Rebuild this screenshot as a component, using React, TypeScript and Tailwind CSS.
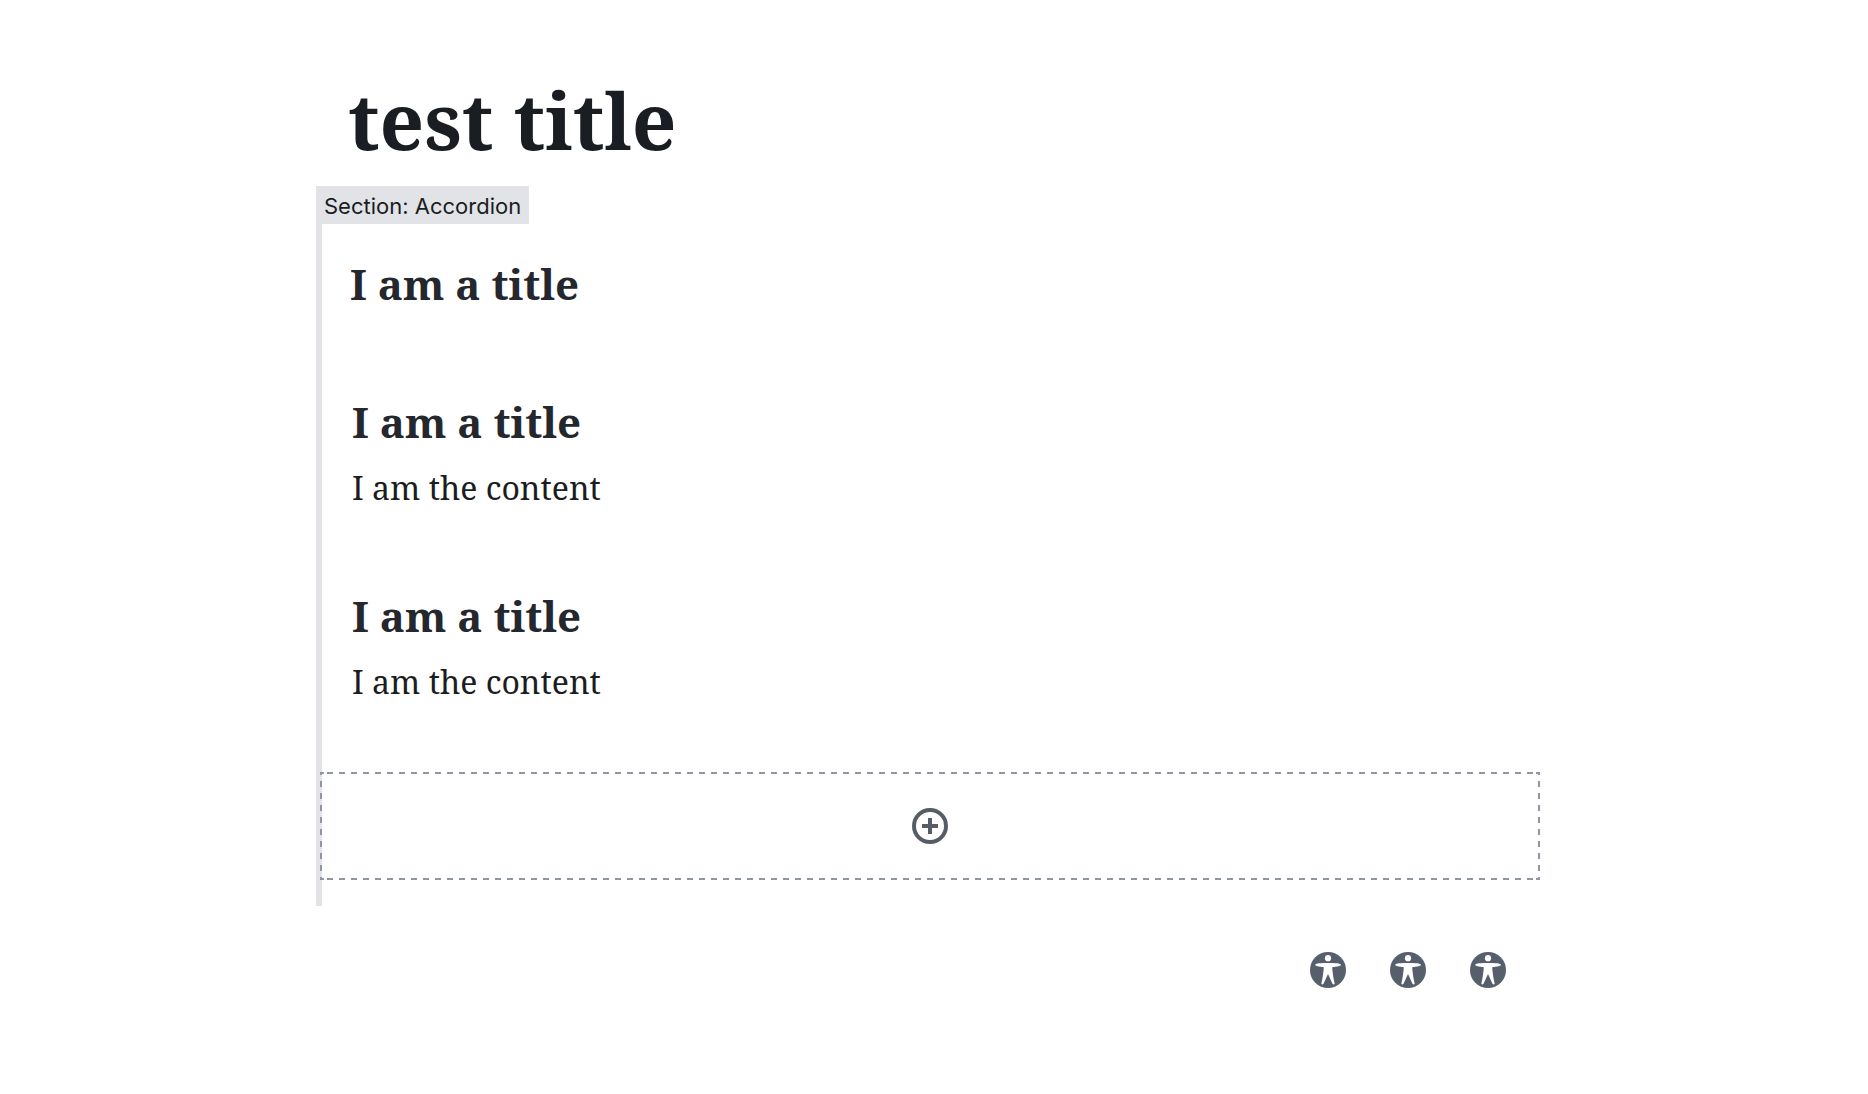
const items = [
  { title: "I am a title", content: "" },
  { title: "I am a title", content: "I am the content" },
  { title: "I am a title", content: "I am the content" },
];

function AddIcon() {
  return (
    <svg className="size-9" viewBox="0 0 36 36" fill="none" stroke="#565d66" strokeWidth="4">
      <circle cx="18" cy="18" r="16" />
      <path d="M10 18h16M18 10v16" />
    </svg>
  );
}

function AccessibilityIcon() {
  return (
    <svg className="size-9" viewBox="0 0 36 36">
      <circle cx="18" cy="18" r="18" fill="#565f6b" />
      <circle cx="18" cy="6.2" r="3.1" fill="#fff" />
      <path
        d="M5.200 12.700C5.200 11.400 11 11 18 11s13 .4 13 1.700c0 1.300-4 2-8.800 2.600.2 5 1.200 10.500 2.400 16.300.2 1.200-1.600 1.200-2.100.2L18 22l-4.500 9.800c-.5 1-2.300 1-2.100-.2 1.200-5.800 2.200-11.300 2.400-16.300-4.800-.6-8.600-1.300-8.600-2.600z"
        fill="#fff"
      />
    </svg>
  );
}

export default function App() {
  return (
    <main className="min-h-screen bg-white pt-20 pr-3 text-[#1a1d21] font-['Noto_Serif','DejaVu_Serif_Condensed','DejaVu_Serif',serif]">
      <div className="mx-auto max-w-[1224px]">
        <h1 className="pl-8 text-[78px] leading-20 font-bold">test title</h1>

        <section className="mt-[26px] border-l-6 border-[#e2e3e7] pb-[26px]">
          <div className="-ml-[6px] flex">
            <span className="bg-[#e2e3e7] px-2 pt-[2px] text-[22px] leading-[36px] font-['Inter',sans-serif]">
              Section: Accordion
            </span>
          </div>

          <div className="flex flex-col gap-[70px] pt-[30px] pb-[62px]">
            {items.map((item, i) => (
              <article key={i} className={item.content ? "pl-[30px]" : "pb-2 pl-7"}>
                <h2 className="text-[42px] leading-[60px] font-bold text-[#24272d]">{item.title}</h2>
                {item.content && (
                  <p className="mt-2 text-[32px] leading-[56px]">{item.content}</p>
                )}
              </article>
            ))}
          </div>

          {/* 6px on / 6px off dashes on all four edges, with short solid corners */}
          <button
            type="button"
            aria-label="Add item"
            className="-ml-[2px] flex h-[108px] w-[calc(100%+2px)] items-center justify-center [background:linear-gradient(90deg,#8f96a3_4px,transparent_0_calc(100%_-_4px),#8f96a3_0)_0_0/100%_2px_no-repeat,linear-gradient(90deg,#8f96a3_4px,transparent_0_calc(100%_-_4px),#8f96a3_0)_0_100%/100%_2px_no-repeat,linear-gradient(90deg,#8f96a3_50%,transparent_0)_7px_0/12px_2px_repeat-x,linear-gradient(90deg,#8f96a3_50%,transparent_0)_7px_100%/12px_2px_repeat-x,linear-gradient(#8f96a3_50%,transparent_0)_0_9px/2px_12px_repeat-y,linear-gradient(#8f96a3_50%,transparent_0)_100%_9px/2px_12px_repeat-y]"
          >
            <AddIcon />
          </button>
        </section>

        <div className="mt-[46px] flex justify-end gap-11 pr-[34px]">
          {[1, 2, 3].map((n) => (
            <button key={n} type="button" aria-label={`Accessibility check ${n}`}>
              <AccessibilityIcon />
            </button>
          ))}
        </div>
      </div>
    </main>
  );
}
